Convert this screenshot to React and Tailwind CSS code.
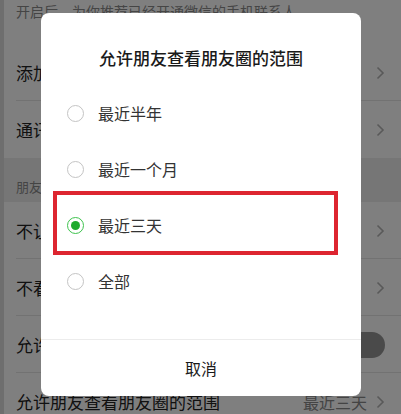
import React from "react";

const Chevron = () => (
    <svg width="9" height="14" viewBox="0 0 9 14" className="shrink-0">
        <path d="M1.5 1.5 L7 7 L1.5 12.5" fill="none" stroke="#b2b2b2" strokeWidth="1.6" />
    </svg>
);

const Row = ({ title, right, last }) => (
    <div className="relative flex h-[57px] items-center justify-between bg-white pl-3 pr-4">
        <span className="text-[17px] text-[#222]">{title}</span>
        {right}
        {!last && <div className="absolute bottom-0 left-3 right-0 h-px bg-[#e5e5e5]" />}
    </div>
);

const Radio = ({ checked }) =>
    checked ? (
        <div className="flex h-[17px] w-[17px] items-center justify-center rounded-full border-[1.5px] border-[#3dc34d]">
            <div className="h-[9px] w-[9px] rounded-full bg-[#1faa2e]" />
        </div>
    ) : (
        <div className="h-[17px] w-[17px] rounded-full border-[1.5px] border-[#c4c4c4]" />
    );

const options = [
    { label: "最近半年", checked: false },
    { label: "最近一个月", checked: false },
    { label: "最近三天", checked: true },
    { label: "全部", checked: false },
];

export default function App() {
    return (
        <div
            className="relative h-[414px] w-[401px] overflow-hidden bg-white"
            style={{ fontFamily: '"Noto Sans CJK SC", "Noto Sans", sans-serif' }}
        >
            {/* page behind the dialog */}
            <div className="flex flex-col border-l-4 border-[#dcdcdc]">
                <div className="h-[44px] bg-white pl-3 pt-[1px] text-[14px] leading-[20px] text-[#8a8a8a]">
                    开启后，为你推荐已经开通微信的手机联系人
                </div>
                <Row title="添加我的方式" right={<Chevron />} />
                <Row title="通讯录黑名单" right={<Chevron />} last />
                <div className="flex h-[44px] items-end bg-[#ededed] pb-[6px] pl-3 text-[13px] text-[#888]">
                    朋友圈
                </div>
                <Row title="不让他（她）看" right={<Chevron />} />
                <Row title="不看他（她）" right={<Chevron />} />
                <Row
                    title="允许陌生人查看十条朋友圈"
                    right={<div className="h-[26px] w-[50px] rounded-full bg-[#949494]" />}
                />
                <Row
                    title="允许朋友查看朋友圈的范围"
                    right={
                        <div className="flex items-center gap-[9px]">
                            <span className="text-[16px] text-[#888]">最近三天</span>
                            <Chevron />
                        </div>
                    }
                    last
                />
            </div>

            {/* mask */}
            <div className="absolute inset-0 bg-black/50" />

            {/* dialog */}
            <div className="absolute left-[41px] top-[13px] flex h-[383px] w-[320px] flex-col rounded-[8px] bg-white">
                <div className="h-[72px] pt-[33px] text-center text-[17px] font-medium leading-[24px] text-[#1a1a1a]">
                    允许朋友查看朋友圈的范围
                </div>
                <div className="flex flex-col">
                    {options.map((o) => (
                        <div key={o.label} className="flex h-[56px] items-center gap-[14px] pl-[26px]">
                            <Radio checked={o.checked} />
                            <span className="text-[16px] text-[#333]">{o.label}</span>
                        </div>
                    ))}
                </div>
                <div className="mt-[30px] h-px bg-[#ececec]" />
                <div className="flex flex-1 items-center justify-center text-[16px] text-[#1a1a1a]">取消</div>

                {/* highlight frame */}
                <div className="absolute left-[12px] top-[178px] h-[64px] w-[285px] border-[4px] border-[#dd2530]" />
            </div>
        </div>
    );
}
